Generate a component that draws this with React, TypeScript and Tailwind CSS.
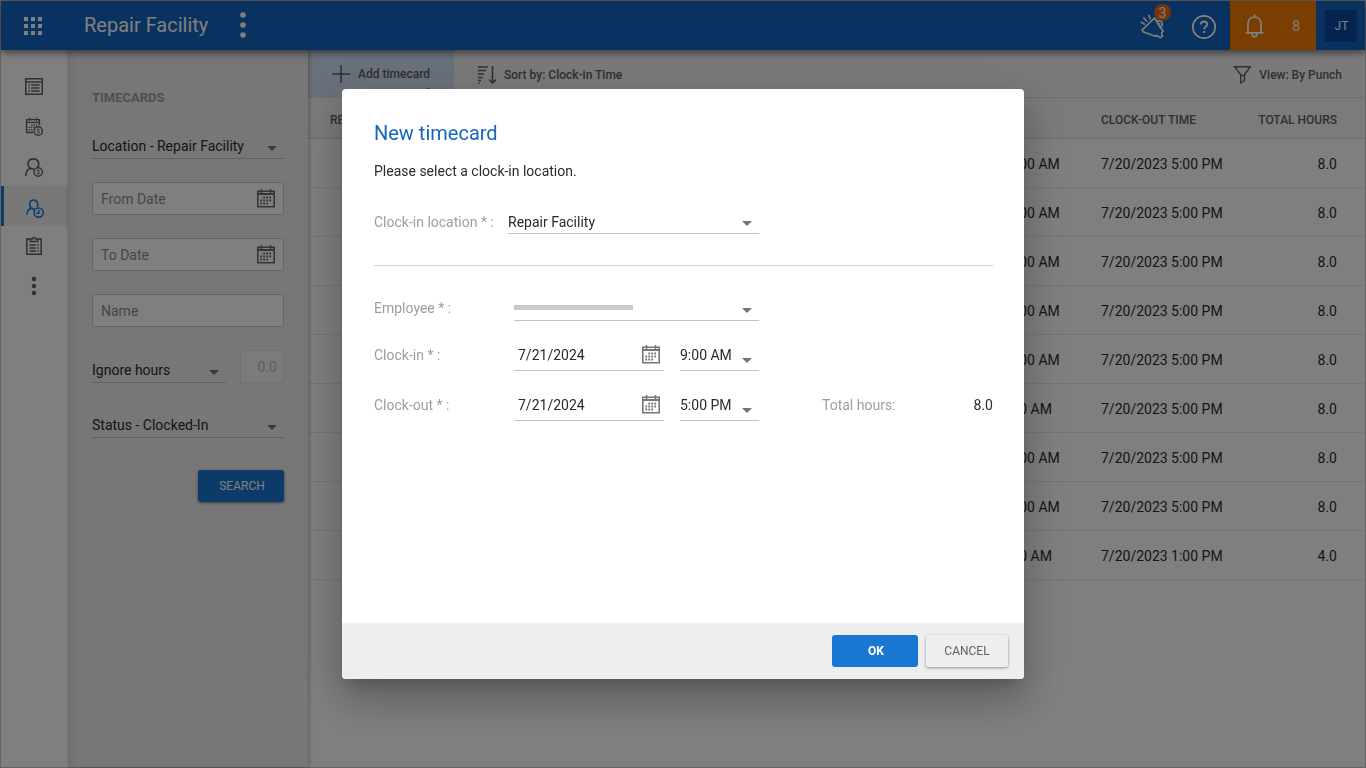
import React from "react";

const arrow = (
  <svg aria-hidden="true" width="10" height="5" viewBox="0 0 10 5" className="pointer-events-none" fill="currentColor">
    <path d="M0 0h10L5 5z" />
  </svg>
);

function SelectField({
  label,
  value,
  className = "",
  arrowClass = "pt-1",
}: {
  label: string;
  value: string;
  className?: string;
  arrowClass?: string;
}) {
  return (
    <div className={`grid items-center border-b border-[#c4c4c4] ${className}`}>
      <select
        aria-label={label}
        defaultValue={value}
        className="col-start-1 row-start-1 h-full w-full appearance-none bg-transparent pr-5 text-sm text-[#2b2b2b] outline-none"
      >
        <option value={value}>{value}</option>
      </select>
      <span className={`pointer-events-none col-start-1 row-start-1 mr-[7px] justify-self-end text-[#757575] ${arrowClass}`}>{arrow}</span>
    </div>
  );
}

function CalendarIcon() {
  return (
    <svg width="18" height="19" viewBox="0 0 18 19" fill="none" stroke="currentColor" aria-hidden="true">
      <path d="M.8 2.3h16.4v15.4H.8z" strokeWidth="1.6" />
      <path d="M.5 5h17" strokeWidth="2" />
      <path d="M4.500 0v4M13.500 0v4" strokeWidth="1.5" />
      <path d="M6.300 8.500h9M3.300 11.500h12M3.300 14.500h9" strokeWidth="1.8" strokeDasharray="1.8 1.200" />
    </svg>
  );
}

function ListIcon() {
  return (
    <svg width="18" height="17" viewBox="0 0 18 17" fill="none" stroke="currentColor" strokeWidth="1.5" aria-hidden="true">
      <path d="M.75.75h16.500v15.500H.75zM.75 4h16.500" />
      <path d="M3.500 7h1.500M6.200 7H14.500M3.500 10h1.500M6.200 10H14.500M3.500 13h1.500M6.200 13H14.500" />
    </svg>
  );
}

function Coin() {
  return (
    <>
      <circle cx="13.2" cy="14" r="4.2" />
      <path d="M14.600 12.600c-.6-.8-2.600-.7-2.600.4s2.600.7 2.600 1.900-2 1.200-2.800.3" strokeWidth="1" />
    </>
  );
}

function PayCalendarIcon() {
  return (
    <svg width="18" height="19" viewBox="0 0 18 19" fill="none" stroke="currentColor" strokeWidth="1.4" aria-hidden="true">
      <path d="M8 15.500H1.600V2.600h12.800V8M1.600 5.400h12.800M4.500.8v3M11.500.8v3" />
      <path d="M6.200 8h6M3.600 10.400h6M3.600 12.800h4" strokeDasharray="1.400 1" />
      <Coin />
    </svg>
  );
}

function PersonIcon({ clock = false }: { clock?: boolean }) {
  return clock ? (
    <svg width="18" height="19" viewBox="0 0 18 19" fill="none" stroke="currentColor" strokeWidth="1.5" className="mt-1" aria-hidden="true">
      <path d="M9 10c-1.200.4-2.600 0-3.600-.8C2.500 7 3.200 1 7.500 1c3.800 0 5.300 4 3.700 7M5.300 9.300C2.500 10.300.8 12.300.8 15.800" />
      <circle cx="12.600" cy="13.600" r="4.600" />
      <path d="M12.800 11v3.200h-2.300" />
    </svg>
  ) : (
    <svg width="18" height="19" viewBox="0 0 18 19" fill="none" stroke="currentColor" strokeWidth="1.6" className="mt-0.5" aria-hidden="true">
      <path d="M9 11c-1.300.2-2.500-.1-3.500-.9C1 6.600 3.200.9 8.300.9c5 0 6.900 5 4.200 8.300M5.500 10.200C2.500 11.300.8 13.800.8 18" />
      <g strokeWidth="1.4">
        <Coin />
      </g>
    </svg>
  );
}

function ClipboardIcon() {
  return (
    <svg width="16" height="18" viewBox="0 0 16 18" fill="none" stroke="currentColor" strokeWidth="1.5" aria-hidden="true">
      <path d="M4.400 2H.8v15.200h14.400V2h-3.600" />
      <path d="M4.400 4.500V2h2C6.400.1 9.600.1 9.600 2h2v2.500z" />
      <path d="M3.400 8h6.400M11.200 8h1.600M3.400 11h6.400M11.200 11h1.600M3.400 14h6.400M11.200 14h1.600" />
    </svg>
  );
}

function DotsIcon({ large = false }: { large?: boolean }) {
  return large ? (
    <svg width="6" height="26" viewBox="0 0 6 26" fill="currentColor" aria-hidden="true">
      <circle cx="3" cy="3" r="2.800" />
      <circle cx="3" cy="13" r="2.800" />
      <circle cx="3" cy="23" r="2.800" />
    </svg>
  ) : (
    <svg width="6" height="20" viewBox="0 0 6 20" fill="currentColor" aria-hidden="true">
      <circle cx="3" cy="3" r="2.200" />
      <circle cx="3" cy="10" r="2.200" />
      <circle cx="3" cy="17" r="2.200" />
    </svg>
  );
}

const navItems = [
  { label: "Schedule", icon: <ListIcon /> },
  { label: "Pay periods", icon: <PayCalendarIcon /> },
  { label: "Employee pay", icon: <PersonIcon /> },
  { label: "Timecards", icon: <PersonIcon clock />, active: true },
  { label: "Tasks", icon: <ClipboardIcon /> },
  { label: "More", icon: <DotsIcon /> },
];

const punches = [
  ["7/20/2023 10:00 AM", "7/20/2023 5:00 PM", "8.0"],
  ["7/20/2023 10:00 AM", "7/20/2023 5:00 PM", "8.0"],
  ["7/20/2023 10:00 AM", "7/20/2023 5:00 PM", "8.0"],
  ["7/20/2023 10:00 AM", "7/20/2023 5:00 PM", "8.0"],
  ["7/20/2023 10:00 AM", "7/20/2023 5:00 PM", "8.0"],
  ["7/20/2023 9:00 AM", "7/20/2023 5:00 PM", "8.0"],
  ["7/20/2023 10:00 AM", "7/20/2023 5:00 PM", "8.0"],
  ["7/20/2023 10:00 AM", "7/20/2023 5:00 PM", "8.0"],
  ["7/20/2023 9:00 AM", "7/20/2023 1:00 PM", "4.0"],
];

function Header() {
  return (
    <header className="relative z-10 flex h-[49px] items-stretch bg-[#1565c0] text-white shadow-[0_2px_8px_rgba(0,0,0,0.6)]">
      <button aria-label="Apps" className="flex w-16 items-center justify-center">
        <svg width="18" height="18" viewBox="0 0 18 18" fill="currentColor" aria-hidden="true">
          <path d="M0 0h4v4H0zM7 0h4v4H7zM14 0h4v4h-4zM0 7h4v4H0zM7 7h4v4H7zM14 7h4v4h-4zM0 14h4v4H0zM7 14h4v4H7zM14 14h4v4h-4z" />
        </svg>
      </button>
      <h1 className="ml-[19px] pt-2.5 text-xl leading-7">Repair Facility</h1>
      <button aria-label="Facility options" className="ml-[29px] flex w-3 items-center justify-center pb-0.5">
        <DotsIcon large />
      </button>
      <div className="ml-auto flex">
        <button aria-label="Announcements, 3 new" className="relative flex w-[51px] items-center justify-center border-l border-[#1a62ae] pr-0.5">
          <svg width="26" height="26" viewBox="0 0 26 26" fill="none" stroke="currentColor" strokeWidth="1.600" strokeLinejoin="round" strokeLinecap="round" aria-hidden="true">
            <path d="M14.500 5 2.200 16.800l.7 2 12.600 4.400 1.300-.8 3.400 2.300 2.300-1.700-1-3.200 1.700-1.600-3.200-4.400z" />
            <path d="M17 9c1.500-1.800 5-1.300 5.300 1.400.2 2-1 3.400-2.800 3.600M18.300 11.200l1.600-.4" />
            <path d="m1.300 9.300 3.300 1.800M3.800 5l3 3.200M9 2.300l1.200 3.500" />
          </svg>
          <span className="absolute top-[3px] left-[25px] flex size-[17px] items-center justify-center rounded-full bg-[#ec6618] text-sm">3</span>
        </button>
        <button aria-label="Help" className="flex w-[51px] items-center justify-center border-x border-[#1a62ae] pr-0.5">
          <svg width="26" height="26" viewBox="0 0 26 26" fill="none" stroke="currentColor" strokeWidth="1.700" aria-hidden="true">
            <circle cx="13" cy="14" r="11.200" />
            <path d="M9.900 11.500c0-4 6.400-4 6.400-.2 0 2.400-3.200 2.400-3.200 5" strokeWidth="1.900" />
            <path d="M12 18h2.200v2H12z" fill="currentColor" stroke="none" />
          </svg>
        </button>
        <button aria-label="8 notifications" className="flex w-[86px] items-center justify-between bg-[#f57c00] pr-4 pl-[15px]">
          <svg width="19" height="24" viewBox="0 0 19 24" fill="none" stroke="currentColor" strokeWidth="1.700" aria-hidden="true">
            <path d="M.5 18.800h18M3 18.800V9.500C3 .9 16 .9 16 9.500v9.300M9.500.2v2.600" />
            <path d="M7 19.200c0 4.800 5 4.800 5 0" />
          </svg>
          <span className="text-sm">8</span>
        </button>
        <button aria-label="Account" className="flex w-[49px] items-center justify-center">
          <span className="flex size-8 items-center justify-center bg-[#0d47a1] pl-0.5 text-xs">JT</span>
        </button>
      </div>
    </header>
  );
}

function DateFilter({ label }: { label: string }) {
  return (
    <div className="mt-[23px] flex h-[33px] items-center border border-[#cacaca] bg-white pr-2 text-[#6a6a6a]">
      <input aria-label={label} placeholder={label} className="h-full w-full min-w-0 bg-transparent pl-2 text-sm outline-none placeholder:text-[#8c8c8c]" />
      <button aria-label={`Pick ${label}`}>
        <CalendarIcon />
      </button>
    </div>
  );
}

function Filters() {
  return (
    <aside className="relative z-[1] w-60 shrink-0 bg-[#eeeeee] px-6 pt-10 shadow-[inset_8px_0_8px_-6px_rgba(0,0,0,0.1),1px_0_4px_rgba(0,0,0,0.3)]">
      <h2 className="text-[13px] leading-4 font-bold text-[#9e9e9e]">TIMECARDS</h2>
      <SelectField label="Location" value="Location - Repair Facility" className="mt-7 h-[25px]" />
      <DateFilter label="From Date" />
      <DateFilter label="To Date" />
      <input aria-label="Name" placeholder="Name" className="mt-[23px] h-[33px] w-full border border-[#cacaca] bg-white px-2 text-sm outline-none placeholder:text-[#8c8c8c]" />
      <div className="mt-[23px] flex items-end justify-between">
        <SelectField label="Hours filter" value="Ignore hours" className="h-[25px] w-[134px]" />
        <input aria-label="Hours" disabled defaultValue="0.0" className="h-[33px] w-11 border border-[#e0e0e0] bg-[#f7f7f7] px-1.5 text-right text-sm text-[#bdbdbd]" />
      </div>
      <SelectField label="Status" value="Status - Clocked-In" className="mt-[30px] h-[25px]" />
      <button className="mt-8 ml-auto block h-8 w-[86px] rounded-[3px] bg-[#1976d2] pl-0.5 text-xs text-white shadow-[0_1px_3px_rgba(0,0,0,0.5)]">SEARCH</button>
    </aside>
  );
}

function Punches() {
  return (
    <main className="min-w-0 flex-1 bg-white">
      <div className="flex h-12 items-center border-b border-[#dedede] bg-[#f5f5f5] text-xs font-medium text-[#616161]">
        <button className="relative flex h-12 w-[146px] items-center gap-2 bg-[#d3e3f8] pl-6">
          <svg width="18" height="18" viewBox="0 0 18 18" stroke="currentColor" strokeWidth="1.600" aria-hidden="true">
            <path d="M9 0v18M0 9h18" />
          </svg>
          Add timecard
          <svg width="14" height="18" viewBox="0 0 14 18" fill="#222" aria-hidden="true" className="absolute top-[38px] left-[114px]">
            <path d="M5 2c0-2.400 3-2.400 3 0v6l5 2v4l-2 4H5l-4-6 1.600-1.400L5 13z" />
          </svg>
        </button>
        <button className="ml-6 flex items-center gap-2 pt-0.5">
          <svg width="18" height="18" viewBox="0 0 18 18" fill="none" stroke="currentColor" strokeWidth="1.600" aria-hidden="true">
            <path d="M0 1h10M0 4.500h8M0 8h6M0 11.500h4.500M0 14.500h3M0 17.200h1.500M14.500 0v17M11 13.500l3.500 3.500 3.500-3.500" />
          </svg>
          Sort by: Clock-in Time
        </button>
        <button className="mr-[23px] ml-auto flex items-center gap-2 pt-0.5">
          <svg width="18" height="18" viewBox="0 0 18 18" fill="none" stroke="currentColor" strokeWidth="1.400" aria-hidden="true">
            <path d="M1.500.8h16L11.500 8.500v6L7.700 17V8.500zM7.700 9.500h3.800" />
          </svg>
          View: By Punch
        </button>
      </div>
      <table className="w-full table-fixed border-collapse text-left text-sm text-[#2b2b2b]">
        <thead className="bg-[#f7f7f7] text-xs text-[#616161]">
          <tr className="h-10 border-b-2 border-[#e4e4e4]">
            <th className="pt-1 pl-[22px] font-medium">REGION</th>
            <th className="w-[171px] pt-1 font-medium">CLOCK-IN TIME</th>
            <th className="w-[142px] pt-1 font-medium">CLOCK-OUT TIME</th>
            <th className="w-[122px] pt-1 pr-7 text-right font-medium">TOTAL HOURS</th>
          </tr>
        </thead>
        <tbody>
          {punches.map(([start, end, hours], i) => (
            <tr key={i} className="h-[49px] border-b border-[#eaeaea]">
              <td></td>
              <td className="pt-0.5">{start}</td>
              <td className="pt-0.5">{end}</td>
              <td className="pt-0.5 pr-7 text-right">{hours}</td>
            </tr>
          ))}
        </tbody>
      </table>
    </main>
  );
}

function PunchRow({ label, time, children }: { label: string; time: string; children?: React.ReactNode }) {
  const id = label.toLowerCase();
  return (
    <div className="mt-5 flex h-[30px] items-stretch">
      <label htmlFor={id} className="w-[140px] self-center pb-0.5 text-[#9e9e9e]">{label} * :</label>
      <div className="flex w-[150px] items-center border-b border-[#c4c4c4] pr-1 pb-0.5 text-[#757575]">
        <input id={id} defaultValue="7/21/2024" className="h-full w-full min-w-0 bg-transparent pl-1 text-[#2b2b2b] outline-none" />
        <button aria-label={`Pick ${label} date`}>
          <CalendarIcon />
        </button>
      </div>
      <SelectField label={`${label} time`} value={time} className="ml-4 w-[79px] pb-0.5" arrowClass="pt-3" />
      {children}
    </div>
  );
}

function Dialog() {
  return (
    <div className="fixed inset-0 z-20 flex items-center justify-center bg-black/50">
      <section
        role="dialog"
        aria-modal="true"
        aria-labelledby="dialog-title"
        className="flex min-h-[590px] w-[682px] max-w-full flex-col overflow-hidden rounded bg-white text-sm text-[#2b2b2b] shadow-[0_11px_15px_-7px_rgba(0,0,0,0.2),0_24px_38px_3px_rgba(0,0,0,0.14),0_9px_46px_8px_rgba(0,0,0,0.12)]"
      >
        <div className="flex-1 pt-8 pr-[31px] pl-8">
          <h2 id="dialog-title" className="text-xl leading-6 text-[#1565c0]">New timecard</h2>
          <p className="mt-4">Please select a clock-in location.</p>
          <div className="mt-7 flex h-[25px] items-center">
            <span className="w-[134px] text-[#9e9e9e]">Clock-in location * :</span>
            <SelectField label="Clock-in location" value="Repair Facility" className="h-[25px] w-[251px] pt-0.5" arrowClass="pt-0.5" />
          </div>
          <hr className="mt-[31px] border-[#d0d0d0]" />
          <div className="mt-[30px] flex h-[25px] items-center">
            <span className="w-[140px] pb-0.5 text-[#9e9e9e]">Employee * :</span>
            <button aria-label="Employee" className="flex h-[25px] w-[245px] items-center justify-between border-b border-[#c4c4c4] pr-[7px] text-[#757575]">
              <span className="mb-0.5 h-[5px] w-[119px] bg-[#cacaca]" />
              <span className="pt-1">{arrow}</span>
            </button>
          </div>
          <PunchRow label="Clock-in" time="9:00 AM" />
          <PunchRow label="Clock-out" time="5:00 PM">
            <span className="ml-[63px] self-center pb-0.5 text-[#9e9e9e]">Total hours:</span>
            <span className="ml-auto self-center pb-0.5">8.0</span>
          </PunchRow>
        </div>
        <footer className="flex h-14 items-center justify-end gap-2 bg-[#eeeeee] px-4 text-xs">
          <button className="h-8 w-[86px] rounded-[3px] bg-[#1976d2] pl-0.5 font-bold text-white">OK</button>
          <button className="h-8 w-[82px] rounded-[2px] bg-[#eeeeee] text-[#616161] shadow-[0_1px_3px_rgba(0,0,0,0.4)]">CANCEL</button>
        </footer>
      </section>
    </div>
  );
}

export default function App() {
  return (
    <div className="flex min-h-screen flex-col border border-[#c8c8c8] bg-white font-[Roboto,sans-serif]">
      <Header />
      <div className="flex flex-1">
        <nav className="flex w-[67px] shrink-0 flex-col bg-white pt-4">
          {navItems.map((item) => (
            <a
              key={item.label}
              href="#"
              aria-label={item.label}
              className={
                item.active
                  ? "flex h-10 items-center justify-center border-l-3 border-[#1976d2] bg-[#f0f0f0] pr-0.5 text-[#1976d2]"
                  : "flex h-10 items-center justify-center pr-0.5 text-[#616161]"
              }
            >
              {item.icon}
            </a>
          ))}
        </nav>
        <Filters />
        <Punches />
      </div>
      <Dialog />
    </div>
  );
}
